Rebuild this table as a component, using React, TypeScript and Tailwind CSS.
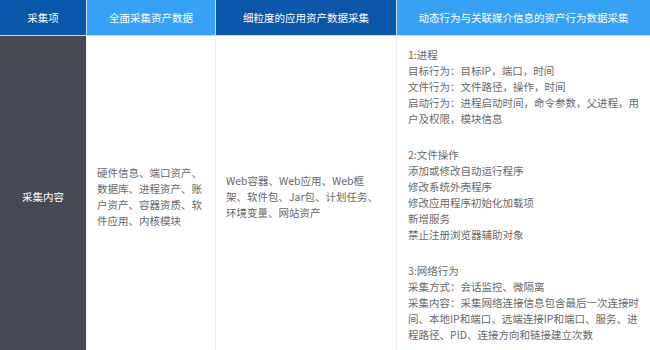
const headers = [
	{ label: "采集项", w: "w-[86px]", bg: "bg-[#0a56a9]" },
	{ label: "全面采集资产数据", w: "w-[128px]", bg: "bg-[#37a1f6]" },
	{ label: "细粒度的应用资产数据采集", w: "w-[180px]", bg: "bg-[#0a56a9]" },
	{ label: "动态行为与关联媒介信息的资产行为数据采集", w: "w-[253px]", bg: "bg-[#37a1f6]" },
];

const hardware = [
	"硬件信息、端口资产、",
	"数据库、进程资产、账",
	"户资产、容器资质、软",
	"件应用、内核模块",
];

const apps = [
	"Web容器、Web应用、Web框",
	"架、软件包、Jar包、计划任务、",
	"环境变量、网站资产",
];

const sections = [
	[
		"1:进程",
		"目标行为：目标IP，端口，时间",
		"文件行为：文件路径，操作，时间",
		"启动行为：进程启动时间，命令参数，父进程，用",
		"户及权限，模块信息",
	],
	[
		"2:文件操作",
		"添加或修改自动运行程序",
		"修改系统外壳程序",
		"修改应用程序初始化加载项",
		"新增服务",
		"禁止注册浏览器辅助对象",
	],
	[
		"3:网络行为",
		"采集方式：会话监控、微隔离",
		"采集内容：采集网络连接信息包含最后一次连接时",
		"间、本地IP和端口、远端连接IP和端口、服务、进",
		"程路径、PID、连接方向和链接建立次数",
	],
];

function Lines({ lines }: { lines: string[] }) {
	return (
		<>
			{lines.map((l) => (
				<div key={l} className="whitespace-nowrap">
					{l}
				</div>
			))}
		</>
	);
}

function App() {
	return (
		<div
			className="w-[650px] h-[350px] overflow-hidden bg-white text-[10.5px] leading-[16px]"
			style={{ fontFamily: '"Noto Sans CJK SC", "Noto Sans", sans-serif' }}
		>
			{/* header */}
			<div className="flex gap-px bg-[#cfe1f4] border-b border-[#c4ddf4]">
				{headers.map((h) => (
					<div
						key={h.label}
						className={`${h.w} ${h.bg} h-[35px] shrink-0 flex items-center justify-center text-white`}
					>
						{h.label}
					</div>
				))}
			</div>

			{/* body */}
			<div className="flex gap-px bg-[#ebebeb] text-[#686868]">
				<div className="w-[86px] shrink-0 bg-[#474955] text-white flex items-center justify-center">
					采集内容
				</div>
				<div className="w-[128px] shrink-0 bg-white flex items-center pl-[10px]">
					<div>
						<Lines lines={hardware} />
					</div>
				</div>
				<div className="w-[180px] shrink-0 bg-white flex items-center pl-[10px]">
					<div>
						<Lines lines={apps} />
					</div>
				</div>
				<div className="w-[253px] shrink-0 bg-white pl-[11px] pt-[11px] pb-[14px] flex flex-col gap-[20px]">
					{sections.map((s) => (
						<div key={s[0]}>
							<Lines lines={s} />
						</div>
					))}
				</div>
			</div>
		</div>
	);
}

export default App;
